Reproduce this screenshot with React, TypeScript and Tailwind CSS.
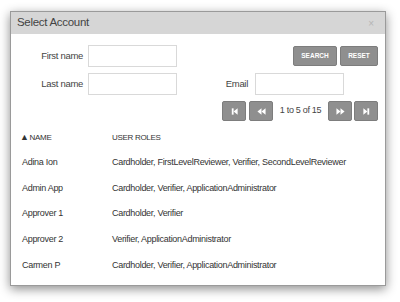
import React from 'react';

const rows = [
  { name: 'Adina Ion', roles: 'Cardholder, FirstLevelReviewer, Verifier, SecondLevelReviewer' },
  { name: 'Admin App', roles: 'Cardholder, Verifier, ApplicationAdministrator' },
  { name: 'Approver 1', roles: 'Cardholder, Verifier' },
  { name: 'Approver 2', roles: 'Verifier, ApplicationAdministrator' },
  { name: 'Carmen P', roles: 'Cardholder, Verifier, ApplicationAdministrator' },
];

const font = { fontFamily: '"Liberation Sans", Arial, sans-serif' };

const PageIcon = ({ kind }: { kind: 'first' | 'prev' | 'next' | 'last' }) => (
  <svg width="9" height="9" viewBox="0 0 10 10" fill="white">
    {kind === 'first' && (
      <>
        <rect x="2" y="1.5" width="2" height="7" />
        <path d="M8.5 1.5 L4 5 L8.5 8.5 Z" />
      </>
    )}
    {kind === 'prev' && (
      <>
        <path d="M5 1.5 L0.5 5 L5 8.5 Z" />
        <path d="M9.5 1.5 L5 5 L9.5 8.5 Z" />
      </>
    )}
    {kind === 'next' && (
      <>
        <path d="M0.5 1.5 L5 5 L0.5 8.5 Z" />
        <path d="M5 1.5 L9.5 5 L5 8.5 Z" />
      </>
    )}
    {kind === 'last' && (
      <>
        <path d="M1.5 1.5 L6 5 L1.5 8.5 Z" />
        <rect x="6" y="1.5" width="2" height="7" />
      </>
    )}
  </svg>
);

const GrayButton = ({ children, className = '' }: { children: React.ReactNode; className?: string }) => (
  <button className={`h-[20px] rounded-[2px] border border-[#7d7d7d] bg-[#8f8f8f] text-white flex items-center justify-center ${className}`}>
    {children}
  </button>
);

export default function App() {
  return (
    <div className="w-[400px] h-[302px] bg-white pt-[11px] pl-[10px]" style={font}>
      <div className="w-[376px] h-[275px] bg-white border border-[#9a9a9a] shadow-[0_3px_10px_rgba(0,0,0,0.45)] flex flex-col">
        <div className="h-[22px] bg-[#d6d6d6] flex items-center justify-between pl-[6px] pr-[11px]">
          <span className="text-[11.5px] tracking-[-0.3px] text-[#444]">Select Account</span>
          <span className="text-[10px] text-[#b5b5b5]">×</span>
        </div>

        <div className="pt-[11px] pr-[7px] flex flex-col gap-[6px] text-[9.5px] tracking-[-0.3px] text-[#444]">
          <div className="flex items-center h-[22px]">
            <label className="w-[72px] text-right">First name</label>
            <input className="ml-[5px] w-[89px] h-[22px] border border-[#d9d9d9] bg-white" />
            <div className="flex-1" />
            <GrayButton className="w-[44px] text-[6.5px] font-bold tracking-normal">SEARCH</GrayButton>
            <GrayButton className="ml-[3px] w-[38px] text-[6.5px] font-bold tracking-normal">RESET</GrayButton>
          </div>
          <div className="flex items-center h-[22px]">
            <label className="w-[72px] text-right">Last name</label>
            <input className="ml-[5px] w-[89px] h-[22px] border border-[#d9d9d9] bg-white" />
            <label className="w-[71px] text-right">Email</label>
            <input className="ml-[7px] w-[89px] h-[22px] border border-[#d9d9d9] bg-white" />
          </div>
          <div className="flex items-center justify-end h-[20px]">
            <GrayButton className="w-[24px]"><PageIcon kind="first" /></GrayButton>
            <GrayButton className="ml-[3px] w-[24px]"><PageIcon kind="prev" /></GrayButton>
            <span className="w-[55px] text-center text-[9px] whitespace-nowrap">1 to 5 of 15</span>
            <GrayButton className="w-[24px]"><PageIcon kind="next" /></GrayButton>
            <GrayButton className="ml-[2px] w-[24px]"><PageIcon kind="last" /></GrayButton>
          </div>
        </div>

        <div className="mt-[5px] text-[#333] tracking-[-0.3px]">
          <div className="flex items-center h-[24px] text-[8px] text-[#333]">
            <div className="w-[101px] pl-[9px] flex items-center"><span className="text-[9px] mr-[1px]">▲</span>NAME</div>
            <div>USER ROLES</div>
          </div>
          {rows.map((r) => (
            <div key={r.name} className="flex items-center h-[25.7px] text-[9px]">
              <div className="w-[101px] pl-[11px]">{r.name}</div>
              <div>{r.roles}</div>
            </div>
          ))}
        </div>
      </div>
    </div>
  );
}
